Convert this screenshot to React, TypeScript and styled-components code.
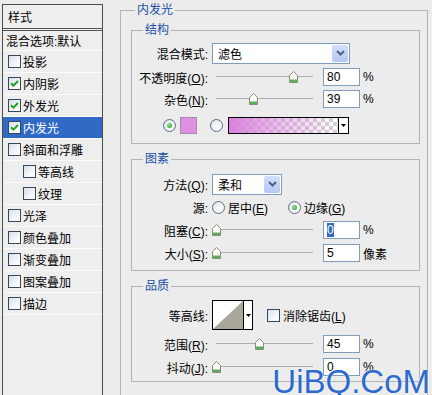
import React from "react";
import styled, { createGlobalStyle } from "styled-components";

const GlobalStyle = createGlobalStyle`
  html, body { margin: 0; padding: 0; background: #ececec; }
  body {
    font-family: "Liberation Sans", "Noto Sans CJK SC", sans-serif;
    font-size: 12px;
    color: #000;
  }
  * { box-sizing: border-box; }
`;

const Screen = styled.div`
  position: relative;
  display: flex;
  align-items: flex-start;
  width: 432px;
  height: 395px;
  overflow: hidden;
  background: #ececec;
`;

/* ---------- left styles list ---------- */
const StylesPanel = styled.div`
  flex-shrink: 0;
  margin: 4px 0 0 2px;
  width: 101px;
  height: 420px;
  border: 1px solid #4b4b4b;
  border-bottom: none;
  background: #eeeeee;
`;

const PanelHeader = styled.div`
  height: 26px;
  padding-left: 5px;
  display: flex;
  align-items: center;
  border-bottom: 3px double #555;
`;

const ListRow = styled.div<{ $h?: number; $indent?: number; $selected?: boolean }>`
  height: ${(p) => p.$h ?? 22}px;
  padding-left: ${(p) => p.$indent ?? 5}px;
  display: flex;
  align-items: center;
  gap: 2px;
  border-bottom: 1px solid #fbfbfb;
  background: ${(p) => (p.$selected ? "#316ac5" : "transparent")};
  color: ${(p) => (p.$selected ? "#fff" : "#000")};
  white-space: nowrap;
`;

const CheckBox = styled.span`
  flex-shrink: 0;
  width: 13px;
  height: 13px;
  border: 1px solid #33475f;
  background: linear-gradient(135deg, #d9dde6 0%, #f4f6f9 60%, #ffffff 100%);
  display: flex;
  align-items: center;
  justify-content: center;
`;

const Check = ({ checked }: { checked?: boolean }) => (
  <CheckBox>
    {checked && (
      <svg width="9" height="9" viewBox="0 0 9 9">
        <path d="M1 4.2 L3.4 6.6 L8 2" fill="none" stroke="#21a121" strokeWidth="2" />
      </svg>
    )}
  </CheckBox>
);

/* ---------- right options ---------- */
const MainArea = styled.div`
  flex-shrink: 0;
  margin: 3px 0 0 17px;
  width: 308px;
`;

const Group = styled.fieldset`
  margin: 0;
  padding: 0;
  min-width: 0;
  border: 1px solid #b3b3b3;
`;

const GroupTitle = styled.legend<{ $offset: number }>`
  margin-left: ${(p) => p.$offset}px;
  padding: 0 2px;
  line-height: 14px;
  font-size: 12px;
  color: #1b4fa6;
`;

const OuterBody = styled.div`
  display: flex;
  flex-direction: column;
  gap: 8px;
  padding: 6px 7px 30px 10px;
`;

const GroupBody = styled.div<{ $pt: number; $pb: number }>`
  display: flex;
  flex-direction: column;
  padding: ${(p) => p.$pt}px 0 ${(p) => p.$pb}px 0;
`;

const Row = styled.div<{ $h?: number; $mt?: number; $pl?: number }>`
  display: flex;
  align-items: center;
  height: ${(p) => p.$h ?? 22}px;
  margin-top: ${(p) => p.$mt ?? 0}px;
  padding-left: ${(p) => p.$pl ?? 0}px;
  white-space: nowrap;
`;

const Label = styled.span`
  flex-shrink: 0;
  width: 76px;
  margin-right: 4px;
  text-align: right;
`;

const Text = styled.span`
  white-space: nowrap;
`;

const Select = styled.div<{ $w: number }>`
  width: ${(p) => p.$w}px;
  height: 21px;
  border: 1px solid #7f9db9;
  background: #fff;
  display: flex;
  align-items: center;
  padding-left: 5px;
`;

const SelectButton = styled.span`
  margin-left: auto;
  margin-right: 1px;
  width: 16px;
  height: 17px;
  border-radius: 2px;
  background: linear-gradient(#d2dffc, #b4c8f6);
  display: flex;
  align-items: center;
  justify-content: center;
`;

const Chevron = () => (
  <svg width="9" height="6" viewBox="0 0 9 6">
    <path d="M1 1 L4.5 4.5 L8 1" fill="none" stroke="#4d6185" strokeWidth="2" />
  </svg>
);

const SliderBox = styled.div`
  position: relative;
  flex-shrink: 0;
  width: 106px;
  height: 14px;
`;

const SliderTrack = styled.div`
  position: absolute;
  left: 4px;
  width: 97px;
  top: 6px;
  height: 1px;
  background: #adadad;
`;

const ThumbSvg = styled.svg`
  position: absolute;
  top: 1px;
`;

const Slider = ({ pct }: { pct: number }) => (
  <SliderBox>
    <SliderTrack />
    <ThumbSvg width="9" height="12" viewBox="0 0 9 12" style={{ left: 4 + pct * 97 - 4.5 }}>
      <path d="M0.5 11.5 V4.5 L4.5 0.5 L8.5 4.5 V11.5 Z" fill="#fbfbf6" stroke="#8a8a80" />
      <rect x="1" y="8.5" width="7" height="2.5" fill="#5cae5c" />
    </ThumbSvg>
  </SliderBox>
);

const NumberBox = styled.div`
  flex-shrink: 0;
  margin-left: 5px;
  width: 37px;
  height: 18px;
  border: 1px solid #7f9db9;
  background: #fff;
  padding-left: 3px;
  display: flex;
  align-items: center;
  line-height: 14px;
`;

const NumberValue = styled.span<{ $selected?: boolean }>`
  background: ${(p) => (p.$selected ? "#316ac5" : "transparent")};
  color: ${(p) => (p.$selected ? "#fff" : "#000")};
`;

const Unit = styled.span`
  margin-left: 3px;
`;

const RadioCircle = styled.span`
  flex-shrink: 0;
  width: 13px;
  height: 13px;
  border-radius: 50%;
  border: 1px solid #5b6f88;
  background: radial-gradient(circle at 65% 65%, #ffffff 0%, #f0f1f3 50%, #d6d9df 100%);
  display: flex;
  align-items: center;
  justify-content: center;
`;

const RadioDot = styled.span`
  width: 5px;
  height: 5px;
  border-radius: 50%;
  background: radial-gradient(circle at 35% 35%, #8fe08f, #2a9a2a);
`;

const Radio = ({ checked }: { checked?: boolean }) => (
  <RadioCircle>{checked && <RadioDot />}</RadioCircle>
);

const RadioOption = styled.span<{ $w?: number }>`
  display: flex;
  align-items: center;
  gap: 3px;
  width: ${(p) => (p.$w ? `${p.$w}px` : "auto")};
`;

const Swatch = styled.span`
  margin-left: 4px;
  margin-right: 13px;
  width: 17px;
  height: 17px;
  border: 1px solid #a78aa8;
  background: #df8fe2;
`;

const GradientPicker = styled.div`
  margin-left: 5px;
  width: 121px;
  height: 17px;
  border: 1px solid #000;
  display: flex;
`;

const GradientFill = styled.span`
  flex: 1;
  background:
    linear-gradient(to right, rgba(218, 128, 222, 1) 0%, rgba(218, 128, 222, 0.55) 40%, rgba(218, 128, 222, 0) 100%),
    repeating-conic-gradient(#d2d2d2 0 25%, #ffffff 0 50%) 0 0 / 8px 8px;
`;

const PickerArrow = styled.span`
  width: 10px;
  border-left: 1px solid #000;
  background: #fff;
  display: flex;
  align-items: center;
  justify-content: center;
`;

const Triangle = () => (
  <svg width="5" height="3" viewBox="0 0 5 3">
    <path d="M0 0 H5 L2.5 3 Z" fill="#000" />
  </svg>
);

const ContourPicker = styled.div`
  width: 41px;
  height: 30px;
  border: 1px solid #000;
  display: flex;
`;

const ContourPreview = styled.svg`
  flex-shrink: 0;
  display: block;
`;

const CheckOption = styled.span`
  margin-left: 14px;
  display: flex;
  align-items: center;
  gap: 3px;
`;

const Watermark = styled.div`
  position: absolute;
  right: 2px;
  top: 365px;
  font-family: "Liberation Sans", Arial, sans-serif;
  font-size: 33px;
  line-height: 33px;
  color: #2c6bcd;
  text-shadow: 0 0 2px #fff;
`;

const Mn = ({ c }: { c: string }) => (
  <>
    (<u>{c}</u>)
  </>
);

const effects: { label: string; checked?: boolean; selected?: boolean; indent?: boolean }[] = [
  { label: "投影" },
  { label: "内阴影", checked: true },
  { label: "外发光", checked: true },
  { label: "内发光", checked: true, selected: true },
  { label: "斜面和浮雕" },
  { label: "等高线", indent: true },
  { label: "纹理", indent: true },
  { label: "光泽" },
  { label: "颜色叠加" },
  { label: "渐变叠加" },
  { label: "图案叠加" },
  { label: "描边" },
];

export default function App() {
  return (
    <>
      <GlobalStyle />
      <Screen>
        <StylesPanel>
          <PanelHeader>样式</PanelHeader>
          <ListRow $h={20} $indent={3}>
            混合选项:默认
          </ListRow>
          {effects.map((e) => (
            <ListRow key={e.label} $indent={e.indent ? 20 : 5} $selected={e.selected}>
              <Check checked={e.checked} />
              <Text>{e.label}</Text>
            </ListRow>
          ))}
        </StylesPanel>

        <MainArea>
          <Group>
            <GroupTitle $offset={14}>内发光</GroupTitle>
            <OuterBody>
              <Group>
                <GroupTitle $offset={11}>结构</GroupTitle>
                <GroupBody $pt={5} $pb={7}>
                  <Row>
                    <Label>混合模式:</Label>
                    <Select $w={138}>
                      <Text>滤色</Text>
                      <SelectButton>
                        <Chevron />
                      </SelectButton>
                    </Select>
                  </Row>
                  <Row $mt={2}>
                    <Label>
                      不透明度<Mn c="O" />:
                    </Label>
                    <Slider pct={0.8} />
                    <NumberBox>
                      <NumberValue>80</NumberValue>
                    </NumberBox>
                    <Unit>%</Unit>
                  </Row>
                  <Row>
                    <Label>
                      杂色<Mn c="N" />:
                    </Label>
                    <Slider pct={0.39} />
                    <NumberBox>
                      <NumberValue>39</NumberValue>
                    </NumberBox>
                    <Unit>%</Unit>
                  </Row>
                  <Row $mt={4} $pl={31}>
                    <Radio checked />
                    <Swatch />
                    <Radio />
                    <GradientPicker>
                      <GradientFill />
                      <PickerArrow>
                        <Triangle />
                      </PickerArrow>
                    </GradientPicker>
                  </Row>
                </GroupBody>
              </Group>

              <Group>
                <GroupTitle $offset={11}>图素</GroupTitle>
                <GroupBody $pt={7} $pb={6}>
                  <Row>
                    <Label>
                      方法<Mn c="Q" />:
                    </Label>
                    <Select $w={70}>
                      <Text>柔和</Text>
                      <SelectButton>
                        <Chevron />
                      </SelectButton>
                    </Select>
                  </Row>
                  <Row $mt={1}>
                    <Label>源:</Label>
                    <RadioOption $w={76}>
                      <Radio />
                      <Text>
                        居中<Mn c="E" />
                      </Text>
                    </RadioOption>
                    <RadioOption>
                      <Radio checked />
                      <Text>
                        边缘<Mn c="G" />
                      </Text>
                    </RadioOption>
                  </Row>
                  <Row $mt={1}>
                    <Label>
                      阻塞<Mn c="C" />:
                    </Label>
                    <Slider pct={0} />
                    <NumberBox>
                      <NumberValue $selected>0</NumberValue>
                    </NumberBox>
                    <Unit>%</Unit>
                  </Row>
                  <Row $mt={1}>
                    <Label>
                      大小<Mn c="S" />:
                    </Label>
                    <Slider pct={0} />
                    <NumberBox>
                      <NumberValue>5</NumberValue>
                    </NumberBox>
                    <Unit>像素</Unit>
                  </Row>
                </GroupBody>
              </Group>

              <Group>
                <GroupTitle $offset={11}>品质</GroupTitle>
                <GroupBody $pt={6} $pb={3}>
                  <Row $h={32}>
                    <Label>等高线:</Label>
                    <ContourPicker>
                      <ContourPreview width="30" height="28" viewBox="0 0 30 28">
                        <rect width="30" height="28" fill="#ffffff" />
                        <path d="M0 28 L30 0 V28 Z" fill="#aaa69c" />
                      </ContourPreview>
                      <PickerArrow>
                        <Triangle />
                      </PickerArrow>
                    </ContourPicker>
                    <CheckOption>
                      <Check />
                      <Text>
                        消除锯齿<Mn c="L" />
                      </Text>
                    </CheckOption>
                  </Row>
                  <Row $mt={2}>
                    <Label>
                      范围<Mn c="R" />:
                    </Label>
                    <Slider pct={0.45} />
                    <NumberBox>
                      <NumberValue>45</NumberValue>
                    </NumberBox>
                    <Unit>%</Unit>
                  </Row>
                  <Row $mt={1}>
                    <Label>
                      抖动<Mn c="J" />:
                    </Label>
                    <Slider pct={0} />
                    <NumberBox>
                      <NumberValue>0</NumberValue>
                    </NumberBox>
                    <Unit>%</Unit>
                  </Row>
                </GroupBody>
              </Group>
            </OuterBody>
          </Group>
        </MainArea>

        <Watermark>UiBQ.CoM</Watermark>
      </Screen>
    </>
  );
}
